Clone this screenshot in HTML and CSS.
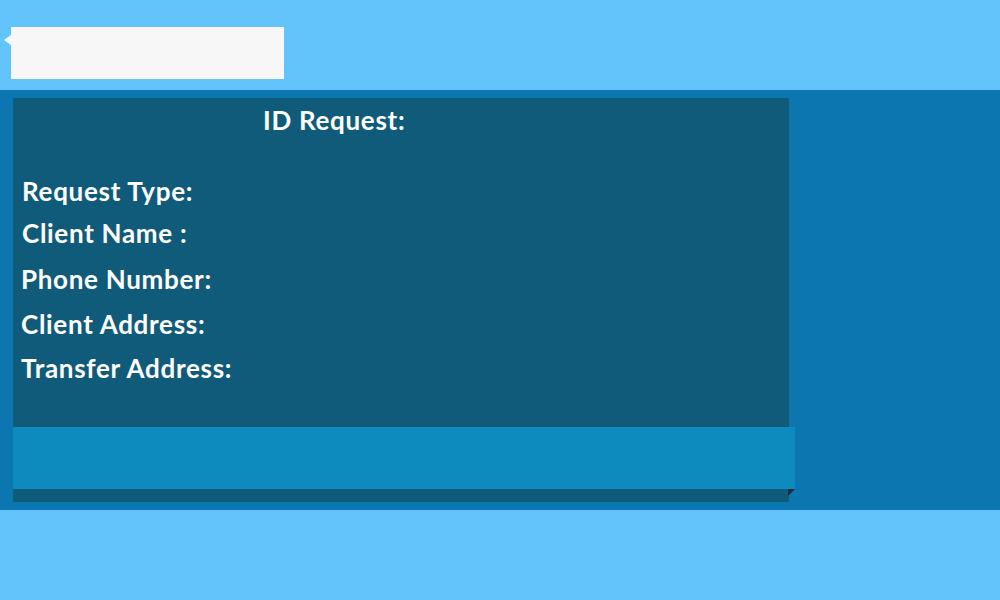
FILE: index.html
```html
<!DOCTYPE html>
<html>
<head>
<meta charset="utf-8">
<link rel="stylesheet" href="styles.css">
</head>
<body>
<header class="top">
  <div class="search"></div>
</header>
<main class="band">
  <section class="panel">
    <h1 class="title">ID Request:</h1>
    <div class="fields">
      <p class="field f1">Request Type:</p>
      <p class="field f2">Client Name :</p>
      <p class="field f3">Phone Number:</p>
      <p class="field f4">Client Address:</p>
      <p class="field f5">Transfer Address:</p>
    </div>
    <div class="bar"></div>
  </section>
</main>
<footer class="bottom"></footer>
</body>
</html>
```
FILE: styles.css
```css
html, body {
  margin: 0;
  padding: 0;
  background: #63c3fb;
  font-family: "Lato", "Open Sans", sans-serif;
}
.top {
  height: 90px;
  box-sizing: border-box;
  padding: 27px 0 0 11px;
  background: #63c3fb;
}
.search {
  position: relative;
  width: 273px;
  height: 52px;
  background: #f7f7f7;
}
.search::before {
  content: "";
  position: absolute;
  left: -7px;
  top: 8px;
  border-style: solid;
  border-width: 5px 7px 5px 0;
  border-color: transparent #f7f7f7 transparent transparent;
}
.band {
  height: 420px;
  box-sizing: border-box;
  padding: 8px 0 0 13px;
  background: #0b76b0;
}
.panel {
  width: 776px;
  height: 404px;
  background: #105b7a;
  display: flex;
  flex-direction: column;
  color: #ffffff;
}
.title {
  margin: 0;
  padding: 4px 0 0 250px;
  font-size: 26px;
  font-weight: 700;
  letter-spacing: 0.7px;
  line-height: 36px;
}
.fields {
  display: flex;
  flex-direction: column;
  padding: 37px 0 0 9px;
  flex: 1;
}
.field {
  margin: 0;
  font-size: 26px;
  font-weight: 700;
  letter-spacing: 0.7px;
  line-height: 32px;
}
.f2 { margin-top: 10px; }
.f3 { margin-top: 14px; margin-left: -1px; }
.f4 { margin-top: 13px; margin-left: -1px; }
.f5 { margin-top: 12px; margin-left: -1px; }
.bar {
  position: relative;
  width: 782px;
  height: 62px;
  margin-bottom: 13px;
  background: #0d8bbf;
}
.bar::after {
  content: "";
  position: absolute;
  right: 0;
  bottom: -7px;
  border-style: solid;
  border-width: 7px 7px 0 0;
  border-color: #172c3c transparent transparent transparent;
}
.bottom {
  height: 90px;
  background: #63c3fb;
}
```
